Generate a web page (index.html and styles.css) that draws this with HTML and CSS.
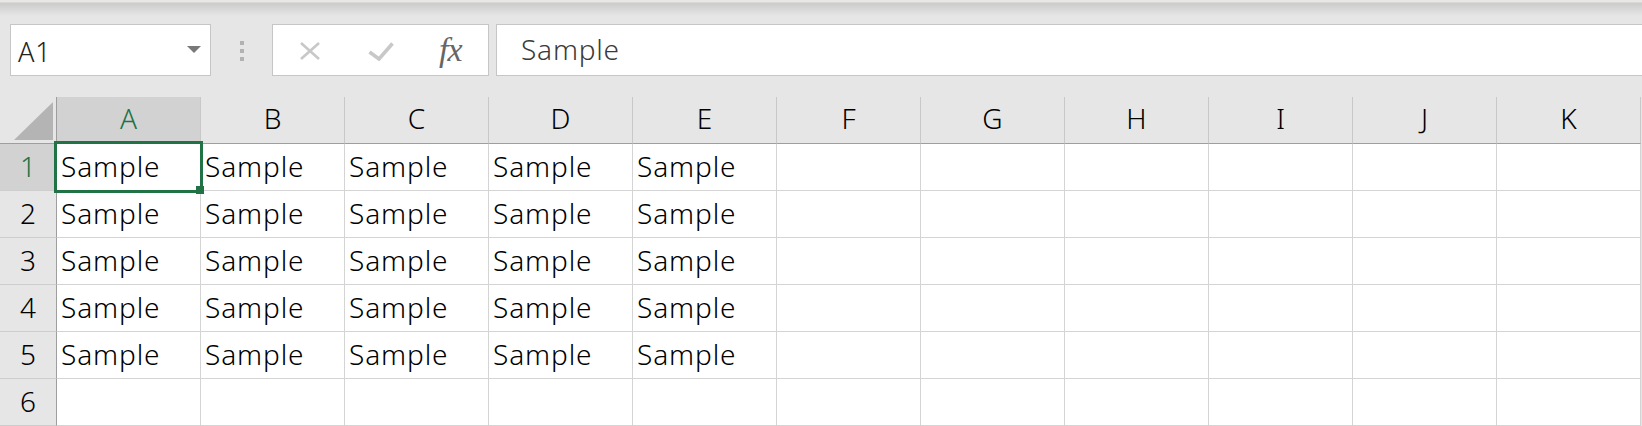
FILE: index.html
```html
<!DOCTYPE html>
<html lang="en">
<head>
    <meta charset="UTF-8">
    <meta name="viewport" content="width=device-width, initial-scale=1.0">
    <title>Book1</title>
    <link rel="stylesheet" href="styles.css">
</head>
<body>
    <div class="toolbar">
        <div class="name-box">
            <span class="name-text">A1</span>
            <svg class="name-arrow" width="14" height="8" viewBox="0 0 14 8"><polygon points="0,0 14,0 7,7" fill="#787878"/></svg>
        </div>
        <div class="grip"><i></i><i></i><i></i></div>
        <div class="fx-buttons">
            <svg class="icon-cancel" width="24" height="18" viewBox="0 0 24 18">
                <line x1="3" y1="1" x2="21" y2="17" stroke="#c8c8c8" stroke-width="2.6"/>
                <line x1="21" y1="1" x2="3" y2="17" stroke="#c8c8c8" stroke-width="2.6"/>
            </svg>
            <svg class="icon-enter" width="26" height="19" viewBox="0 0 26 19">
                <polyline points="1.5,10 11,17 24.5,1.5" fill="none" stroke="#c8c8c8" stroke-width="3.6"/>
            </svg>
            <span class="fx">fx</span>
        </div>
        <div class="formula-input">Sample</div>
    </div>

    <div class="sheet">
        <div class="hd corner">
            <svg width="40" height="38" viewBox="0 0 40 38"><polygon points="39,0 39,38 0,38" fill="#b4b4b4"/></svg>
        </div>
        <div class="hd col active">A</div>
        <div class="hd col">B</div>
        <div class="hd col">C</div>
        <div class="hd col">D</div>
        <div class="hd col">E</div>
        <div class="hd col">F</div>
        <div class="hd col">G</div>
        <div class="hd col">H</div>
        <div class="hd col">I</div>
        <div class="hd col">J</div>
        <div class="hd col">K</div>

        <div class="hd row active">1</div>
        <div class="cell">Sample</div><div class="cell">Sample</div><div class="cell">Sample</div><div class="cell">Sample</div><div class="cell">Sample</div>
        <div class="cell"></div><div class="cell"></div><div class="cell"></div><div class="cell"></div><div class="cell"></div><div class="cell"></div>

        <div class="hd row">2</div>
        <div class="cell">Sample</div><div class="cell">Sample</div><div class="cell">Sample</div><div class="cell">Sample</div><div class="cell">Sample</div>
        <div class="cell"></div><div class="cell"></div><div class="cell"></div><div class="cell"></div><div class="cell"></div><div class="cell"></div>

        <div class="hd row">3</div>
        <div class="cell">Sample</div><div class="cell">Sample</div><div class="cell">Sample</div><div class="cell">Sample</div><div class="cell">Sample</div>
        <div class="cell"></div><div class="cell"></div><div class="cell"></div><div class="cell"></div><div class="cell"></div><div class="cell"></div>

        <div class="hd row">4</div>
        <div class="cell">Sample</div><div class="cell">Sample</div><div class="cell">Sample</div><div class="cell">Sample</div><div class="cell">Sample</div>
        <div class="cell"></div><div class="cell"></div><div class="cell"></div><div class="cell"></div><div class="cell"></div><div class="cell"></div>

        <div class="hd row">5</div>
        <div class="cell">Sample</div><div class="cell">Sample</div><div class="cell">Sample</div><div class="cell">Sample</div><div class="cell">Sample</div>
        <div class="cell"></div><div class="cell"></div><div class="cell"></div><div class="cell"></div><div class="cell"></div><div class="cell"></div>

        <div class="hd row">6</div>
        <div class="cell"></div><div class="cell"></div><div class="cell"></div><div class="cell"></div><div class="cell"></div>
        <div class="cell"></div><div class="cell"></div><div class="cell"></div><div class="cell"></div><div class="cell"></div><div class="cell"></div>

        <!-- active cell outline + fill handle -->
        <div class="selection"></div>
        <div class="fill-handle"></div>
    </div>
</body>
</html>
```

FILE: styles.css
```css
* {
    margin: 0;
    padding: 0;
    box-sizing: border-box;
}

body {
    background-color: #e6e6e6;
    font-family: 'Noto Sans', 'Noto Sans CJK JP', sans-serif;
    font-weight: 300;
    overflow: hidden;
}

/* ---- formula bar ---- */

.toolbar {
    height: 97px;
    padding: 24px 0 0 10px;
    display: flex;
    align-items: flex-start;
    background: linear-gradient(#e9e7e3 0, #e9e7e3 2px, #cbcbcb 3px, #e6e6e6 16px);
}

.name-box {
    width: 201px;
    height: 52px;
    background-color: #ffffff;
    border: 1px solid #c6c6c6;
    display: flex;
    align-items: center;
    padding: 2px 9px 0 7px;
}

.name-text {
    flex: 1;
    font-size: 27px;
    color: #222222;
    letter-spacing: 0.8px;
}

.name-arrow {
    margin-top: -3px;
}

.grip {
    width: 61px;
    height: 52px;
    display: flex;
    flex-direction: column;
    align-items: center;
    gap: 4px;
    padding-top: 17px;
}

.grip i {
    width: 4px;
    height: 4px;
    background-color: #b2b2b2;
}

.fx-buttons {
    width: 217px;
    height: 52px;
    background-color: #ffffff;
    border: 1px solid #c6c6c6;
    display: flex;
    align-items: flex-start;
    padding: 17px 0 0 25px;
}

.icon-enter {
    margin-left: 46px;
}

.fx {
    margin: -11px 0 0 45px;
    font-family: 'Liberation Serif', serif;
    font-style: italic;
    font-size: 34px;
    color: #666666;
    letter-spacing: -1px;
}

.formula-input {
    flex: 1;
    height: 52px;
    margin-left: 7px;
    background-color: #ffffff;
    border: 1px solid #c6c6c6;
    border-right: none;
    padding-left: 24px;
    font-size: 28px;
    line-height: 48px;
    color: #3a3a3a;
    letter-spacing: 0.8px;
}

/* ---- worksheet grid ---- */

.sheet {
    position: relative;
    display: grid;
    grid-template-columns: 57px repeat(11, 144px);
    grid-auto-rows: 47px;
    width: 1641px;
    background-color: #ffffff;
}

.hd {
    background-color: #e6e6e6;
    color: #000000;
    font-size: 28px;
    display: flex;
    align-items: center;
    justify-content: center;
}

.hd.col {
    border-right: 1px solid #c8c8c8;
    border-bottom: 1px solid #9e9e9e;
    padding-bottom: 4px;
}

.hd.row {
    border-right: 1px solid #9e9e9e;
    border-bottom: 1px solid #cdcdcd;
    padding-bottom: 2px;
}

.hd.active {
    background-color: #d2d2d2;
    color: #217346;
}

.corner {
    border-right: 1px solid #9e9e9e;
    border-bottom: 1px solid #9e9e9e;
    align-items: flex-start;
    justify-content: flex-start;
    padding: 5px 0 0 14px;
}

.cell {
    border-right: 1px solid #d4d4d4;
    border-bottom: 1px solid #d4d4d4;
    padding: 0 0 2px 4px;
    font-size: 28px;
    color: #000000;
    letter-spacing: 0.9px;
    display: flex;
    align-items: center;
    white-space: nowrap;
}

.selection {
    position: absolute;
    left: 54px;
    top: 44px;
    width: 149px;
    height: 52px;
    border: 3px solid #217346;
}

.fill-handle {
    position: absolute;
    left: 196px;
    top: 89px;
    width: 8px;
    height: 8px;
    background-color: #217346;
}
```
